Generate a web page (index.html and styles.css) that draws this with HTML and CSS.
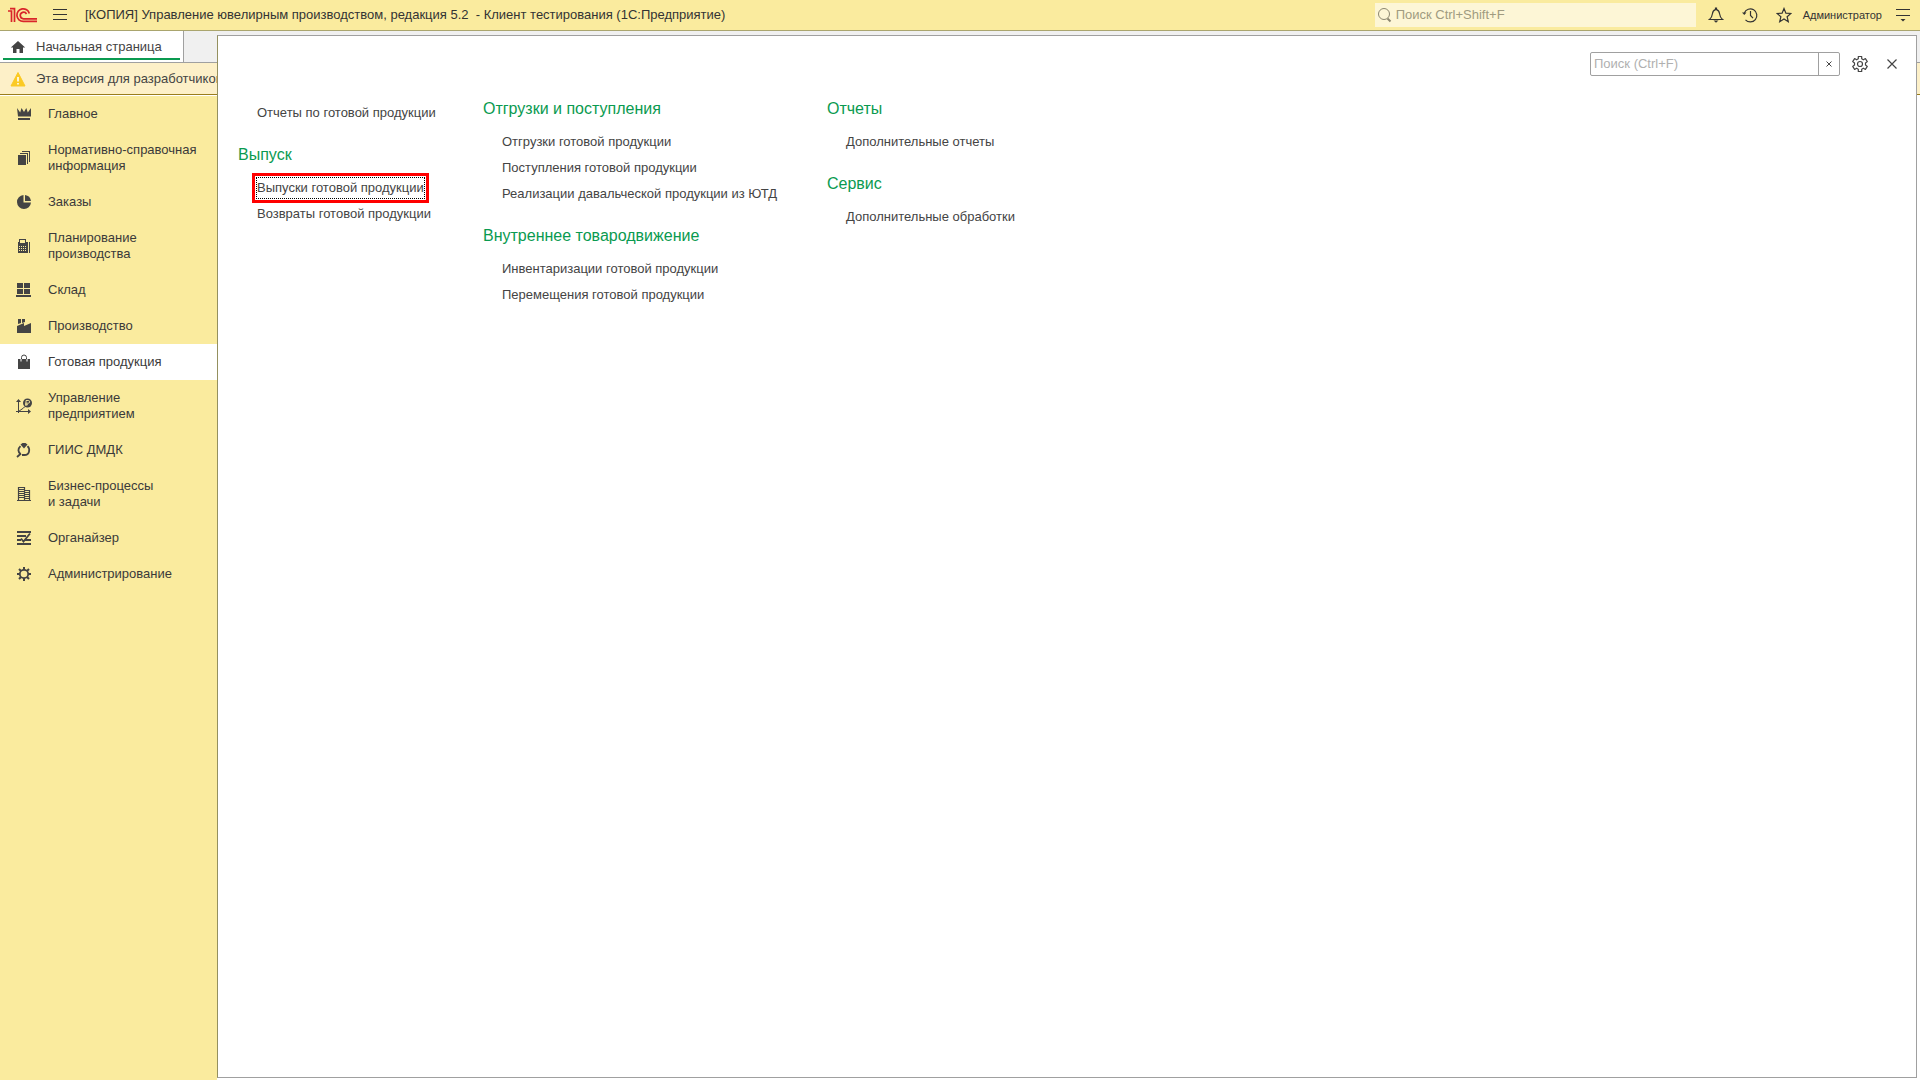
FILE: index.html
```html
<!DOCTYPE html>
<html lang="ru">
<head>
<meta charset="utf-8">
<title>Управление ювелирным производством</title>
<link rel="stylesheet" href="styles.css">
</head>
<body>
<header class="topbar">
  <svg class="logo" width="32" height="16" viewBox="7 7 32 16" aria-label="1С"><g fill="none" stroke="#d9252a" stroke-width="1.700"><path d="M8 11h3.500v11M10 8.700h4.500v13.300"/><path d="M29.300 13.500a6.300 6.300 0 1 0-6 7.900H37M26.500 14a3.300 3.300 0 1 0-3 4.800H37"/></g></svg>
  <button class="icon-btn menu-btn" aria-label="Меню"><svg width="16" height="16" viewBox="0 0 16 16"><path d="M1 2.500h14M1 7.500h14M1 12.500h14" stroke="#333"/></svg></button>
  <h1 class="app-title">[КОПИЯ] Управление ювелирным производством, редакция 5.2 &nbsp;- Клиент тестирования (1С:Предприятие)</h1>
  <label class="global-search">
    <svg width="16" height="16" viewBox="0 0 16 16" fill="none" stroke="#8c8770"><circle cx="7" cy="7" r="5.500"/><path d="M10.500 11.500l3 3" stroke-width="2"/></svg>
    <input type="text" aria-label="Поиск" placeholder="Поиск Ctrl+Shift+F">
  </label>
  <nav class="top-tools">
    <button class="icon-btn" aria-label="Уведомления"><svg width="16" height="16" viewBox="0 0 16 16"><path d="M1.500 12.500h13c-2-1.500-2.500-2.500-3-6C11.200 4 10 3 8.500 2.600V1h-1v1.600C6 3 4.800 4 4.500 6.500c-.5 3.500-1 4.500-3 6z" fill="none" stroke="#333" stroke-width="1.200"/><path d="M5.500 13.500h5L8 15.700z" fill="#333"/></svg></button>
    <button class="icon-btn" aria-label="История"><svg width="16" height="16" viewBox="0 0 16 16" fill="none" stroke="#333" stroke-width="1.200"><path d="M2.300 6A6.500 6.500 0 1 1 3.500 12.800M8.500 4v4.500l2.500 2.700"/><path d="M0 5.500h4.500L2.300 8z" fill="#333" stroke="none"/></svg></button>
    <button class="icon-btn" aria-label="Избранное"><svg width="16" height="16" viewBox="0 0 16 16" fill="none" stroke="#333" stroke-width="1.200"><path d="M8 1.500l1.900 4.700 5 .3-3.800 3.200 1.200 5L8 12l-4.300 2.700 1.200-5L1.100 6.500l5-.3z"/></svg></button>
    <a class="user" href="#">Администратор</a>
    <button class="icon-btn" aria-label="Настройки"><svg width="16" height="16" viewBox="0 0 16 16"><path d="M1 2.500h14M1 8.500h14" stroke="#333"/><path d="M5.500 12h5L8 14.500z" fill="#333"/></svg></button>
  </nav>
</header>
<div class="workspace">
  <div class="tabs">
    <a class="tab" href="#"><svg width="16" height="16" viewBox="0 0 16 16"><path d="M8 2L.8 8.500H3V14h3.500v-4h3v4H13V8.500h2.200z" fill="#444"/></svg><span>Начальная страница</span></a>
  </div>
  <div class="notice"><svg width="16" height="16" viewBox="0 0 16 16"><path d="M8 1.500L15 15H1z" fill="#fbca24" stroke="#fbca24"/><path d="M8 6v4.500M8 12v1.500" stroke="#fff" stroke-width="1.600"/></svg><span>Эта версия для разработчиков</span></div>
  <nav class="sections" aria-label="Разделы">
    <a href="#"><svg viewBox="0 0 16 16"><path d="M1 2l3.200 4.500L5.500 2l2.500 4 2.300-4 1.500 4.500L15 2v8.500H2zM2 12h12v2H2z"/></svg><span>Главное</span></a>
    <a href="#"><svg viewBox="0 0 16 16"><path d="M2 5h8v10H2zM4 3h8v11h-1V4H4zM6 1h8v11h-1V2H6z"/></svg><span>Нормативно-справочная информация</span></a>
    <a href="#"><svg viewBox="0 0 16 16"><path d="M7.500 1v7.500H15A7 7 0 1 1 7.500 1zM9 1a7 7 0 0 1 6 6H9z"/></svg><span>Заказы</span></a>
    <a href="#"><svg viewBox="0 0 16 16"><path fill-rule="evenodd" d="M2 4h1V1h7v3h2v11H2zM4 2v3h5V2zM13 4h1v11h-1zM3 8h1v1H3zm2 0h1v1H5zm2 0h1v1H7zm2 0h1v1H9zM3 10h1v1H3zm2 0h1v1H5zm2 0h1v1H7zm2 0h1v1H9zM3 12h1v1H3zm2 0h1v1H5zm2 0h1v1H7zm2 0h1v1H9z"/></svg><span>Планирование производства</span></a>
    <a href="#"><svg viewBox="0 0 16 16"><path d="M1 1h6v5H1zM8 1h6v5H8zM1 7h6v5H1zM8 7h6v5H8zM0 13h15v2H0z"/></svg><span>Склад</span></a>
    <a href="#"><svg viewBox="0 0 16 16"><path d="M2 1h3v4L2 6zM6 1h3v3L6 5zM1 8l7-3v3l7-3v10H1z"/></svg><span>Производство</span></a>
    <a href="#" class="current" aria-current="page"><svg viewBox="0 0 16 16"><path d="M2 5h12v10H2z"/><path d="M5.500 7V3.500a2.500 2.500 0 0 1 5 0V7" fill="none" stroke="#444"/><path d="M5 5v2.500M11 5v2.500" stroke="#fff"/></svg><span>Готовая продукция</span></a>
    <a href="#"><svg viewBox="0 0 16 16"><path d="M2.500 15V2M0 13.500h14M2.500 13.500l5-3.500 1-1" fill="none" stroke="#444"/><path d="M0 4l2.500-3L5 4zM12 11l3 2.500L12 16z"/><circle cx="11.500" cy="5" r="4.500"/><path d="M10 8V2.500h2.300a1.300 1.300 0 0 1 0 2.700H9M9 6.700h3" fill="none" stroke="#faeb9e" stroke-width=".9"/></svg><span>Управление<br>предприятием</span></a>
    <a href="#"><svg viewBox="0 0 16 16"><path d="M4.500 2.500L6.500 1h3l2 1.500-3.500 4z"/><path d="M4.500 4.200C1.500 7 2 10 4.500 12M11.500 4.200c3 2.800 2 8.800-3 8.800H6M5 11.500L1 15" fill="none" stroke="#444" stroke-width="1.800"/></svg><span>ГИИС ДМДК</span></a>
    <a href="#"><svg viewBox="0 0 16 16"><path d="M2.500 14V1.500h6V14M9 4.500h4.500V14M1 14.500h14M3 3.500h5M3 5.500h5M3 7.500h5M3 9.500h5M3 11.500h5M9 6.500h4M9 8.500h4M9 10.500h4M9 12.500h4" fill="none" stroke="#444" stroke-width="1.200"/></svg><span>Бизнес-процессы<br>и задачи</span></a>
    <a href="#"><svg viewBox="0 0 16 16"><path d="M1 1h14v2H1zM1 5h9v2H1zM1 9h4v2H1zM9 9h6v2H9zM1 13h14v2H1z"/><path d="M5 8.500l2.500 3L14 3.500" fill="none" stroke="#444" stroke-width="1.800"/></svg><span>Органайзер</span></a>
    <a href="#"><svg viewBox="0 0 16 16"><circle cx="8" cy="8" r="4.200" fill="none" stroke="#444" stroke-width="1.800"/><path d="M8 1v3M8 12v3M1 8h3M12 8h3M3 3l2 2M11 11l2 2M13 3l-2 2M5 11l-2 2" stroke="#444" stroke-width="2"/></svg><span>Администрирование</span></a>
  </nav>

  <main class="panel">
    <div class="panel-tools">
      <div class="panel-search">
        <input type="text" aria-label="Поиск в разделе" placeholder="Поиск (Ctrl+F)">
        <button aria-label="Очистить"><svg width="6" height="6" viewBox="0 0 6 6"><path d="M.5.5l5 5M5.500.5l-5 5" stroke="#444"/></svg></button>
      </div>
      <button class="icon-btn" aria-label="Настройка"><svg width="18" height="18" viewBox="0 0 18 18" fill="none" stroke="#444" stroke-width="1.200"><circle cx="9" cy="9" r="2.500"/><path d="M7.300 1.500h3.400v2.300l1.700 1 2-1.200 1.900 3L14.500 8v2l1.800 1.400-1.900 3-2-1.200-1.700 1v2.300H7.300v-2.300l-1.700-1-2 1.200-1.900-3L3.500 10V8L1.700 6.600l1.900-3 2 1.200 1.700-1z" stroke-linejoin="round"/></svg></button>
      <button class="icon-btn" aria-label="Закрыть"><svg width="10" height="10" viewBox="0 0 10 10"><path d="M.5.5l9 9M9.500.5l-9 9" stroke="#444" stroke-width="1.200"/></svg></button>
    </div>
    <div class="columns">
      <div class="column">
        <ul class="untitled"><li><a href="#">Отчеты по готовой продукции</a></li></ul>
        <section>
          <h2>Выпуск</h2>
          <ul><li><a href="#" class="focused">Выпуски готовой продукции</a></li><li><a href="#">Возвраты готовой продукции</a></li></ul>
        </section>
      </div>
      <div class="column">
        <section>
          <h2>Отгрузки и поступления</h2>
          <ul><li><a href="#">Отгрузки готовой продукции</a></li><li><a href="#">Поступления готовой продукции</a></li><li><a href="#">Реализации давальческой продукции из ЮТД</a></li></ul>
        </section>
        <section>
          <h2>Внутреннее товародвижение</h2>
          <ul><li><a href="#">Инвентаризации готовой продукции</a></li><li><a href="#">Перемещения готовой продукции</a></li></ul>
        </section>
      </div>
      <div class="column">
        <section>
          <h2>Отчеты</h2>
          <ul><li><a href="#">Дополнительные отчеты</a></li></ul>
        </section>
        <section>
          <h2>Сервис</h2>
          <ul><li><a href="#">Дополнительные обработки</a></li></ul>
        </section>
      </div>
    </div>
  </main>
</div>
</body>
</html>
```
FILE: styles.css
```css
* { box-sizing: border-box; }
body {
  margin: 0;
  min-height: 100vh;
  display: flex;
  flex-direction: column;
  font: 13px/16px "Liberation Sans", Arial, sans-serif;
  color: #444;
  background: #fff;
}
a { color: inherit; text-decoration: none; }
button, input { font: inherit; color: inherit; }
svg { display: block; flex: none; }
ul { list-style: none; margin: 0; padding: 0; }

.topbar {
  display: flex;
  align-items: center;
  height: 31px;
  padding: 0 9px 0 7px;
  background: #faeb9e;
  border-bottom: 1px solid #aaa56e;
}
.icon-btn { padding: 0; border: 0; background: none; }
.menu-btn { margin-left: 13px; }
.app-title { margin: 0 auto 0 17px; font-size: 13px; font-weight: 400; line-height: 18px; white-space: nowrap; color: #333; }
.global-search {
  display: flex;
  align-items: center;
  gap: 3px;
  width: 321px;
  height: 24px;
  padding: 0 2px;
  background: #fdf6d6;
}
.global-search input { flex: 1; min-width: 0; padding: 0; border: 0; background: none; outline: 0; }
.global-search input::placeholder { color: #a09b80; }
.top-tools { display: flex; align-items: center; margin-left: 12px; gap: 18px; }
.user { font-size: 11px; margin: 0 -5px 0 -7px; white-space: nowrap; color: #333; }

.workspace { position: relative; flex: 1; display: flex; flex-direction: column; }
.tabs { display: flex; height: 32px; background: #f0f0f0; border-bottom: 1px solid #a0a0a0; }
.tab {
  display: flex;
  align-items: center;
  gap: 10px;
  width: 184px;
  padding-left: 10px;
  background: linear-gradient(#0a9a50, #0a9a50) 3px 27px / 177px 2px no-repeat #fff;
  border-right: 1px solid #a0a0a0;
}
.notice {
  display: flex;
  align-items: center;
  gap: 10px;
  height: 32px;
  padding-left: 10px;
  background: #fdf0c8;
  border-bottom: 1px solid #9a7d1c;
  white-space: nowrap;
}
.sections { flex: 1; width: 217px; margin-top: 1px; background: #faeb9e; }
.sections a { display: flex; align-items: center; gap: 16px; padding: 10px 8px 10px 16px; color: #3a3a3a; }
.sections svg { width: 16px; height: 16px; fill: #444; }
.sections .current { background: #fff; }

.panel {
  position: absolute;
  inset: 4px 3px 2px 217px;
  padding: 16px 19px 16px 20px;
  background: #fff;
  border: 1px solid #a0a0a0;
  border-left-color: #94905f;
}
.panel-tools { display: flex; justify-content: flex-end; align-items: center; }
.panel-search { display: flex; width: 250px; height: 24px; margin-right: 11px; border: 1px solid #a0a0a0; border-radius: 2px; }
.panel-search input { flex: 1; min-width: 0; padding: 0 3px; border: 0; outline: 0; background: none; }
.panel-search input::placeholder { color: #b0b0b0; }
.panel-search button { display: grid; place-items: center; width: 21px; padding: 0; border: 0; border-left: 1px solid #a0a0a0; background: none; }
.panel-tools .icon-btn + .icon-btn { margin-left: 18px; }

.columns {
  display: grid;
  grid-template-columns: minmax(245px, max-content) minmax(344px, max-content) auto;
  margin-top: 12px;
}
.column { display: flex; flex-direction: column; gap: 9px; }
.column h2 { margin: 0; padding-top: 2px; font-size: 16px; font-weight: 400; line-height: 38px; color: #0a9a50; }
.column ul { padding-left: 19px; }
.column .untitled { margin-top: 11px; }
.column li { display: flex; padding: 4px 0 2px; }
.column li a { position: relative; line-height: 20px; white-space: nowrap; }
.focused { outline: 1px dotted #000; }
.focused::after { content: ""; position: absolute; inset: -5px; border: 3px solid #f00; }
```
